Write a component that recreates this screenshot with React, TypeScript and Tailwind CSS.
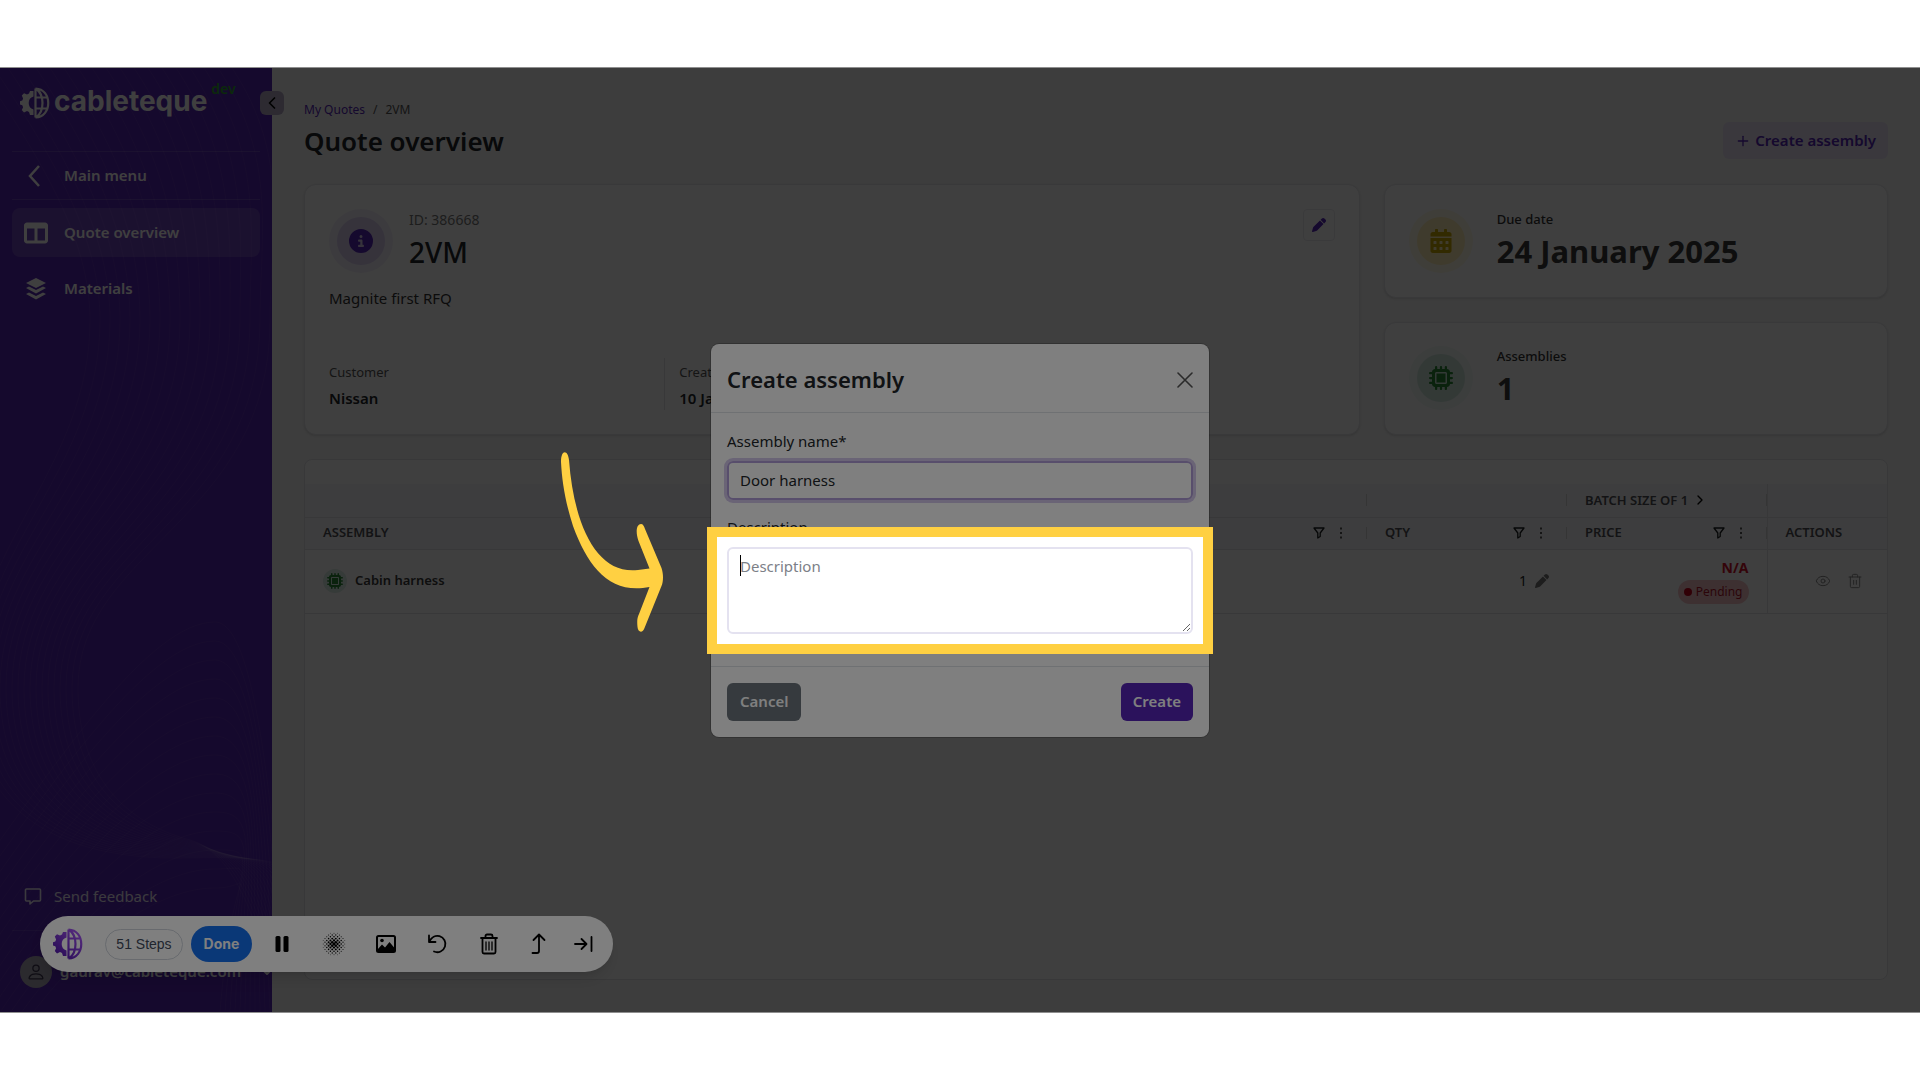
import { useState } from "react";
import type { ReactNode } from "react";
import { ChevronLeft, ChevronRight, Eye, Plus, Trash2 } from "lucide-react";
import { FaCalendarAlt } from "react-icons/fa";
import { FaCircleInfo, FaMicrochip, FaPen, FaTableColumns } from "react-icons/fa6";
import { BsPerson } from "react-icons/bs";

const TONES = {
  purple: { outer: "bg-[#5624b8]/8", inner: "bg-[#5624b8]/16", icon: "text-[#5624b8]" },
  yellow: { outer: "bg-[#ffc107]/10", inner: "bg-[#ffc107]/22", icon: "text-[#c9a800]" },
  green: { outer: "bg-[#198754]/6", inner: "bg-[#198754]/16", icon: "text-[#2a8a36]" },
};

function LogoMark({ className, gradient }: { className?: string; gradient?: boolean }) {
  const color = gradient ? "url(#mark)" : "currentColor";
  return (
    <svg viewBox="0 0 30 32" className={className} fill="none" aria-hidden="true">
      <defs>
        <linearGradient id="mark" gradientUnits="userSpaceOnUse" x1="28" y1="2" x2="2" y2="30">
          <stop offset="0" stopColor="#b05cff" />
          <stop offset="1" stopColor="#4a12a8" />
        </linearGradient>
      </defs>
      <path
        d="M13.500 4v5.500a6.800 6.800 0 0 0 0 13V28H10l-1-3-2-.9-3 1.300-2.200-2.300 1.300-2.800-.8-2L0 17.500v-3.200l2.300-.9.8-2-1.300-2.900L4 6.200l3 1.300 2-.9L10 4z"
        fill={color}
      />
      <path d="M15.500 1.500v29M15.500 1.500c17 .5 17 28.500 0 29M16.500 2c8 6 8 22 0 28M15.500 10.500h12M15.500 21.500h12" stroke={color} strokeWidth="2.200" />
    </svg>
  );
}

function SidebarWaves() {
  const flow = Array.from({ length: 19 }, (_, i) => i);
  const arcs = Array.from({ length: 15 }, (_, i) => i);
  return (
    <svg viewBox="0 0 272 944" preserveAspectRatio="xMinYMin slice" className="absolute inset-0 h-full w-full" fill="none" stroke="#fff" strokeOpacity="0.06" aria-hidden="true">
      {flow.map((i) => {
        const top = -20 + 14 * i;
        const mid = 90 + 10 * i;
        const low = -30 + 6 * i;
        return (
          <path
            key={i}
            d={`M${top} 0C${top + 60} 90 ${mid} 170 ${mid} 252C${mid} ${400 + 3 * i} ${low} 480 ${low} 620C${low} 720 ${low + 60} ${794 - 2 * i} 190 ${790 - i}S260 ${820 + 3 * i} 290 ${850 + 6 * i}`}
          />
        );
      })}
      {arcs.map((i) => {
        const peak = 554 + 19 * i;
        return <path key={i} d={`M-20 ${800 + 16 * i}C60 ${690 + 14 * i} 150 ${peak} 215 ${peak}C260 ${peak} ${275 - 3 * i} 780 ${290 - 5 * i} 944`} />;
      })}
    </svg>
  );
}

function StackIcon() {
  return (
    <svg viewBox="0 0 24 24" className="size-6" fill="currentColor" aria-hidden="true">
      <path d="M12 1 22 6 12 11 2 6z" />
      <path d="M2 11l3-1.500 7 3.500 7-3.500 3 1.500-10 5.500z" />
      <path d="M2 17l3-1.500 7 3.500 7-3.500 3 1.500-10 5.500z" />
    </svg>
  );
}

function FeedbackIcon() {
  return (
    <svg viewBox="0 0 18 18" className="size-[18px]" fill="none" stroke="currentColor" strokeWidth="1.600" strokeLinejoin="round" aria-hidden="true">
      <path d="M2.500 2h13a1 1 0 0 1 1 1v10a1 1 0 0 1-1 1H9.500L6 17v-3H2.500a1 1 0 0 1-1-1V3a1 1 0 0 1 1-1z" />
    </svg>
  );
}

function FilterIcon() {
  return (
    <svg viewBox="0 0 12 12" className="size-3 text-[#181d1f]" fill="none" stroke="currentColor" strokeWidth="1.300" strokeLinejoin="round" aria-hidden="true">
      <path d="M1 1h10L7.200 6v3.500L4.800 11V6z" />
    </svg>
  );
}

function DotsIcon() {
  return (
    <svg viewBox="0 0 4 12" className="h-3 w-1 text-[#555]" fill="currentColor" aria-hidden="true">
      <rect x="1" y="0.500" width="2" height="2" />
      <rect x="1" y="5" width="2" height="2" />
      <rect x="1" y="9.500" width="2" height="2" />
    </svg>
  );
}

function BadgeIcon({ tone, children }: { tone: keyof typeof TONES; children: ReactNode }) {
  const t = TONES[tone];
  return (
    <span className={`flex size-16 shrink-0 items-center justify-center rounded-full ${t.outer}`}>
      <span className={`flex size-12 items-center justify-center rounded-full ${t.inner} ${t.icon}`}>{children}</span>
    </span>
  );
}

function Sidebar() {
  return (
    <aside className="relative flex w-[272px] shrink-0 flex-col bg-[#5624b4] text-white">
      <SidebarWaves />
      <div className="relative flex flex-1 flex-col px-3">
        <div className="flex h-[83px] items-start gap-1 pt-[18px] pl-2">
          <LogoMark className="mt-px h-8 w-[30px]" />
          <span className="font-['Inter','Liberation_Sans',sans-serif] text-[28px] leading-[30px] font-bold">cableteque</span>
          <span className="-mt-1 text-sm leading-none font-semibold text-[#2fa52f]">dev</span>
        </div>
        <nav className="flex flex-col">
          <a href="#menu" className="flex h-[49px] items-center gap-4 border-y border-white/15 px-3 text-[15px] font-semibold">
            <svg viewBox="0 0 24 24" className="size-6" fill="none" stroke="currentColor" strokeWidth="2.500" aria-hidden="true">
              <path d="M15 2 6 12l9 10" />
            </svg>
            Main menu
          </a>
          <a href="#quote" className="mt-2 flex h-[49px] items-center gap-4 rounded-lg bg-white/15 px-3 text-[15px] font-semibold">
            <FaTableColumns className="size-6" />
            Quote overview
          </a>
          <a href="#materials" className="mt-2 flex h-[47px] items-center gap-4 rounded-lg px-3 text-[15px] font-semibold">
            <StackIcon />
            Materials
          </a>
        </nav>
        <a href="#feedback" className="mt-auto flex h-8 items-center gap-3 px-3 text-[15px] text-white/90">
          <FeedbackIcon />
          Send feedback
        </a>
        <div className="mt-[18px] flex h-[82px] items-center border-t border-white/10 pl-2">
          <span className="flex size-8 shrink-0 items-center justify-center rounded-full bg-[#ada8b8] text-[#3c3550]">
            <BsPerson className="size-5" />
          </span>
          <span className="ml-2 text-[15px] font-semibold">gaurav@cableteque.com</span>
          <svg viewBox="0 0 10 6" className="-mr-3 ml-auto h-[6px] w-[10px] shrink-0" fill="none" stroke="currentColor" strokeWidth="2" aria-hidden="true">
            <path d="M1 1l4 4 4-4" />
          </svg>
        </div>
      </div>
      <button type="button" aria-label="Collapse sidebar" className="absolute top-[23px] right-[-12px] z-[1] flex size-6 items-center justify-center rounded-md bg-[#b4aac6] text-black">
        <ChevronLeft className="size-5" strokeWidth={2} />
      </button>
    </aside>
  );
}

function StatCard({ label, value, tone, children }: { label: string; value: string; tone: keyof typeof TONES; children: ReactNode }) {
  return (
    <div className="flex flex-1 items-center gap-6 rounded-xl border border-[#e4e4e8] bg-white px-6 shadow-sm">
      <BadgeIcon tone={tone}>{children}</BadgeIcon>
      <div>
        <div className="text-[13px] leading-5 font-medium text-[#333]">{label}</div>
        <div className="text-[31px] leading-11 font-bold text-[#3a3a3a]">{value}</div>
      </div>
    </div>
  );
}

function ColumnHead({ title }: { title: string }) {
  return (
    <div className="flex items-center gap-[14px]">
      <span className="flex-1">{title}</span>
      <button type="button" aria-label="Filter"><FilterIcon /></button>
      <button type="button" aria-label="Column menu"><DotsIcon /></button>
    </div>
  );
}

function AssembliesTable() {
  const tick = <span className="absolute top-1/2 right-0 h-3 w-px -translate-y-1/2 bg-[#d5d5d5]" />;
  return (
    <div className="flex-1 rounded-lg border border-[#e2e2e6] bg-white pt-6">
      <table className="w-full table-fixed border-collapse text-left">
        <colgroup>
          <col />
          <col className="w-[200px]" />
          <col className="w-[200px]" />
          <col className="w-[120px]" />
        </colgroup>
        <thead className="bg-[#f7f7f8] text-[13px] font-semibold text-[#4f4f55]">
          <tr className="h-[33px] border-b border-[#e2e2e4]">
            <th className="relative">{tick}</th>
            <th className="relative">{tick}</th>
            <th className="relative px-[18px] font-semibold">
              <span className="flex items-center gap-1">
                BATCH SIZE OF 1
                <ChevronRight className="size-4 text-black" />
              </span>
              {tick}
            </th>
            <th className="border-l border-[#e2e2e4]" />
          </tr>
          <tr className="h-8 border-b border-[#e2e2e4]">
            <th className="relative pr-6 pl-[18px] font-semibold"><ColumnHead title="ASSEMBLY" />{tick}</th>
            <th className="relative pr-6 pl-[18px] font-semibold"><ColumnHead title="QTY" />{tick}</th>
            <th className="relative pr-6 pl-[18px] font-semibold"><ColumnHead title="PRICE" />{tick}</th>
            <th className="border-l border-[#e2e2e4] px-[18px] font-semibold">ACTIONS</th>
          </tr>
        </thead>
        <tbody>
          <tr className="h-16 border-b border-[#e2e2e4]">
            <td className="px-[18px]">
              <span className="flex items-center gap-2 text-[13px] font-semibold text-[#3a3a3a]">
                <span className="flex size-6 items-center justify-center rounded-full bg-[#198754]/16 text-[#2a8a36]">
                  <FaMicrochip className="size-4" />
                </span>
                Cabin harness
              </span>
            </td>
            <td className="px-[18px]">
              <span className="flex items-center justify-end gap-2 text-sm text-[#222]">
                1
                <FaPen className="size-[14px] text-[#777]" />
              </span>
            </td>
            <td className="px-[18px]">
              <div className="flex flex-col items-end gap-[2px]">
                <span className="text-sm leading-5 font-bold text-[#d0112b]">N/A</span>
                <span className="flex h-6 items-center gap-1 rounded-full bg-[#dc3545]/30 px-[6px] text-xs text-[#b0152a]">
                  <span className="size-2 rounded-full bg-[#c4001a]" />
                  Pending
                </span>
              </div>
            </td>
            <td className="border-l border-[#e2e2e4]">
              <span className="flex justify-end gap-4 pr-6 text-[#8a8a8a]">
                <button type="button" aria-label="View"><Eye className="size-4" strokeWidth={1.5} /></button>
                <button type="button" aria-label="Delete"><Trash2 className="size-4" strokeWidth={1.5} /></button>
              </span>
            </td>
          </tr>
        </tbody>
      </table>
    </div>
  );
}

function RecorderBar() {
  const dots: { x: number; y: number; r: number }[] = [];
  for (let row = -6; row <= 6; row++) {
    for (let col = -6; col <= 6; col++) {
      if ((row + col) % 2 !== 0) continue;
      const d = Math.hypot(row, col);
      if (d <= 6.4) dots.push({ x: 12 + col * 1.8, y: 12 + row * 1.8, r: 1.5 - d * 0.17 });
    }
  }
  return (
    <div className="absolute bottom-10 left-10 z-20 flex h-14 w-[573px] items-center rounded-full bg-white pl-[13px] font-['Inter','Liberation_Sans',sans-serif] text-black shadow-lg">
      <LogoMark gradient className="h-8 w-[30px]" />
      <span className="ml-[22px] flex h-[31px] w-[78px] items-center justify-center rounded-full border border-[#d0d5dd] font-['Liberation_Sans',sans-serif] text-sm text-[#414a5c]">51 Steps</span>
      <button type="button" className="ml-2 h-9 w-[61px] rounded-full bg-[#1570ef] text-sm font-bold text-white">Done</button>
      <div className="ml-[18px] flex items-center gap-5">
        <div className="flex items-center gap-7">
          <button type="button" aria-label="Pause">
            <svg viewBox="0 0 24 24" className="size-6" fill="currentColor">
              <rect x="5.500" y="4" width="5" height="16" rx="1.500" />
              <rect x="13.500" y="4" width="5" height="16" rx="1.500" />
            </svg>
          </button>
          <button type="button" aria-label="Blur">
            <svg viewBox="0 0 24 24" className="size-6" fill="currentColor">
              {dots.map((d) => <circle key={`${d.x}-${d.y}`} cx={d.x} cy={d.y} r={d.r} />)}
            </svg>
          </button>
          <button type="button" aria-label="Screenshot">
            <svg viewBox="0 0 24 24" className="size-6" fill="none" stroke="currentColor" strokeWidth="2">
              <rect x="3" y="4" width="18" height="16" rx="1.500" />
              <path d="M3.500 19.500v-2l4.500-5 3 3 4.500-5.500 5 6v3.500z" fill="currentColor" stroke="none" />
              <circle cx="8" cy="8.500" r="1.800" fill="currentColor" stroke="none" />
            </svg>
          </button>
          <button type="button" aria-label="Undo">
            <svg viewBox="0 0 24 24" className="size-6" fill="none" stroke="currentColor" strokeWidth="1.800" strokeLinecap="round" strokeLinejoin="round">
              <path d="M3 3.500v6.500H9.500M3.300 9.500C5.500 5.500 9.500 3 13.500 4.200c4.500 1.300 7 6 5.500 10.300-1.500 4.600-6.500 7-11 5" />
            </svg>
          </button>
          <button type="button" aria-label="Delete recording">
            <svg viewBox="0 0 24 24" className="size-6" fill="none" stroke="currentColor" strokeWidth="1.800" strokeLinecap="round" strokeLinejoin="round">
              <path d="M3 6h16M7.500 6V4a1.500 1.500 0 0 1 1.500-1.500h4A1.500 1.500 0 0 1 14.500 4v2M4.500 6v14a1.500 1.500 0 0 0 1.500 1.500h10a1.500 1.500 0 0 0 1.500-1.500V6" />
              <path d="M8 10v8M11 10v8M14 10v8" strokeWidth="1.300" />
            </svg>
          </button>
          <button type="button" aria-label="Move up">
            <svg viewBox="0 0 24 24" className="size-6" fill="none" stroke="currentColor" strokeWidth="1.800" strokeLinecap="round" strokeLinejoin="round">
              <path d="M3.500 8 9 2.500 14.500 8M9 3v16a2 2 0 0 1-2 2H2.500" />
            </svg>
          </button>
        </div>
        <button type="button" aria-label="Dock">
          <svg viewBox="0 0 24 24" className="size-6" fill="none" stroke="currentColor" strokeWidth="1.800" strokeLinecap="round" strokeLinejoin="round">
            <path d="M1 12h11M7.500 7l5 5-5 5M17.500 5v14" />
          </svg>
        </button>
      </div>
    </div>
  );
}

function CreateAssemblyModal() {
  const [name, setName] = useState("Door harness");
  const [description, setDescription] = useState("");

  return (
    <div className="absolute inset-0 z-30 flex items-center justify-center">
      <div role="dialog" aria-labelledby="modal-title" className="w-[498px] rounded-lg bg-white text-[#212529] ring-1 ring-black/20">
        <div className="flex h-[69px] items-center justify-between border-b border-[#dee2e6] px-4 pt-1">
          <h2 id="modal-title" className="text-[22px] font-semibold">Create assembly</h2>
          <button type="button" aria-label="Close" className="text-[#555]">
            <svg viewBox="0 0 16 16" className="size-4" fill="none" stroke="currentColor" strokeWidth="1.600" strokeLinecap="round">
              <path d="M1 1l14 14M15 1 1 15" />
            </svg>
          </button>
        </div>
        <div className="px-4 pt-4 pb-8 text-[15px]">
          <label htmlFor="assembly-name" className="block leading-6">Assembly name*</label>
          <input
            id="assembly-name"
            value={name}
            onChange={(e) => setName(e.target.value)}
            className="mt-2 block h-[39px] w-full rounded-md border-2 border-[#b09cd8] px-[11px] ring-3 ring-[#5624b4]/25 outline-none"
          />
          <label htmlFor="assembly-description" className="mt-[15px] block leading-6">Description</label>
          <div className="relative mt-2">
            <textarea
              id="assembly-description"
              placeholder="Description"
              value={description}
              onChange={(e) => setDescription(e.target.value)}
              className="block h-[87px] w-full rounded-md border-2 border-[#e4e2f0] bg-white px-[11px] py-[5px] leading-6 outline-none placeholder:text-[#7c8087]"
            />
            {description === "" && <span className="absolute top-2 left-[13px] h-[21px] w-px bg-black" />}
            <div className="pointer-events-none absolute -inset-5 border-10 border-[#ffd042] shadow-[0_0_0_2000px_rgba(0,0,0,0.5)]" />
          </div>
        </div>
        <div className="flex items-center justify-between border-t border-[#dee2e6] px-4 py-4 text-[15px] font-semibold text-white">
          <button type="button" className="h-[38px] rounded-md bg-[#6c757d] px-[13px]">Cancel</button>
          <button type="button" className="h-[38px] rounded-md bg-[#5624b8] px-3">Create</button>
        </div>
      </div>
    </div>
  );
}

function CurvedArrow() {
  return (
    <svg viewBox="0 0 104 182" className="absolute top-[383px] left-1/2 z-40 -ml-[400px] h-[182px] w-[104px]" fill="#ffd042" aria-hidden="true">
      <path d="M1 11C1 -2 8 -1 9 9C14 75 37 124 78 119L89.500 117.500L78.500 90C75 80 77 73 81 73C83 73 84 75 85 78L101.500 117C103.500 123 103.500 130 101.500 135L84.500 177C83 182 78 182 77.500 176C77 171 77 167 79 163L89.500 136C50 144 28 116 13 75C5 50 2 30 1 11Z" />
    </svg>
  );
}

export default function App() {
  return (
    <div className="flex min-h-screen flex-col bg-white py-[67px] font-['Segoe_UI','Noto_Sans',sans-serif]">
      <div className="relative flex flex-1 overflow-hidden border-y border-[#8f8f8f] bg-[#f6f6f6]">
        <Sidebar />
        <main className="flex min-w-0 flex-1 flex-col p-8">
          <header className="flex items-end justify-between">
            <div>
              <nav className="flex gap-2 text-xs leading-5 text-[#555]">
                <a href="#quotes" className="text-[#5624b8]">My Quotes</a>
                <span>/</span>
                <span>2VM</span>
              </nav>
              <h1 className="text-[26px] leading-[42px] font-semibold text-[#212529]">Quote overview</h1>
            </div>
            <button type="button" className="mb-[3px] flex h-[37px] items-center gap-1 rounded-md bg-[#e9e3f4] px-3 text-[15px] font-semibold text-[#5624b8]">
              <Plus className="size-4" />
              Create assembly
            </button>
          </header>

          <section className="mt-[22px] grid grid-cols-[minmax(0,1055fr)_minmax(0,504fr)] gap-6">
            <div className="flex h-[251px] flex-col rounded-xl border border-[#e4e4e8] bg-white p-6 shadow-sm">
              <div className="flex items-start gap-4">
                <BadgeIcon tone="purple"><FaCircleInfo className="size-6" /></BadgeIcon>
                <div className="flex-1">
                  <div className="text-sm leading-[22px] text-[#777]">ID: 386668</div>
                  <div className="text-[28px] leading-[42px] font-medium text-[#212529]">2VM</div>
                </div>
                <button type="button" aria-label="Edit quote" className="flex size-8 items-center justify-center rounded border border-[#ebe9ef] text-[#5624b8]">
                  <FaPen className="size-[14px]" />
                </button>
              </div>
              <p className="mt-[13px] text-[15px] leading-6 text-[#333]">Magnite first RFQ</p>
              <dl className="mt-auto grid grid-cols-3 text-[13px] text-[#555]">
                <div>
                  <dt className="leading-7">Customer</dt>
                  <dd className="text-[15px] leading-6 font-semibold text-[#212529]">Nissan</dd>
                </div>
                <div className="border-l border-[#e2e2e4] pl-[14px]">
                  <dt className="w-fit leading-7">Creat</dt>
                  <dd className="w-fit text-[15px] leading-6 font-semibold text-[#212529]">10 Ja</dd>
                </div>
              </dl>
            </div>
            <div className="flex flex-col gap-6">
              <StatCard label="Due date" value="24 January 2025" tone="yellow"><FaCalendarAlt className="size-6" /></StatCard>
              <StatCard label="Assemblies" value="1" tone="green"><FaMicrochip className="size-6" /></StatCard>
            </div>
          </section>

          <section className="mt-6 flex flex-1 flex-col">
            <AssembliesTable />
          </section>
        </main>

        <div className="absolute inset-0 z-10 bg-black/50" />
        <RecorderBar />
        <CreateAssemblyModal />
        <CurvedArrow />
      </div>
    </div>
  );
}
